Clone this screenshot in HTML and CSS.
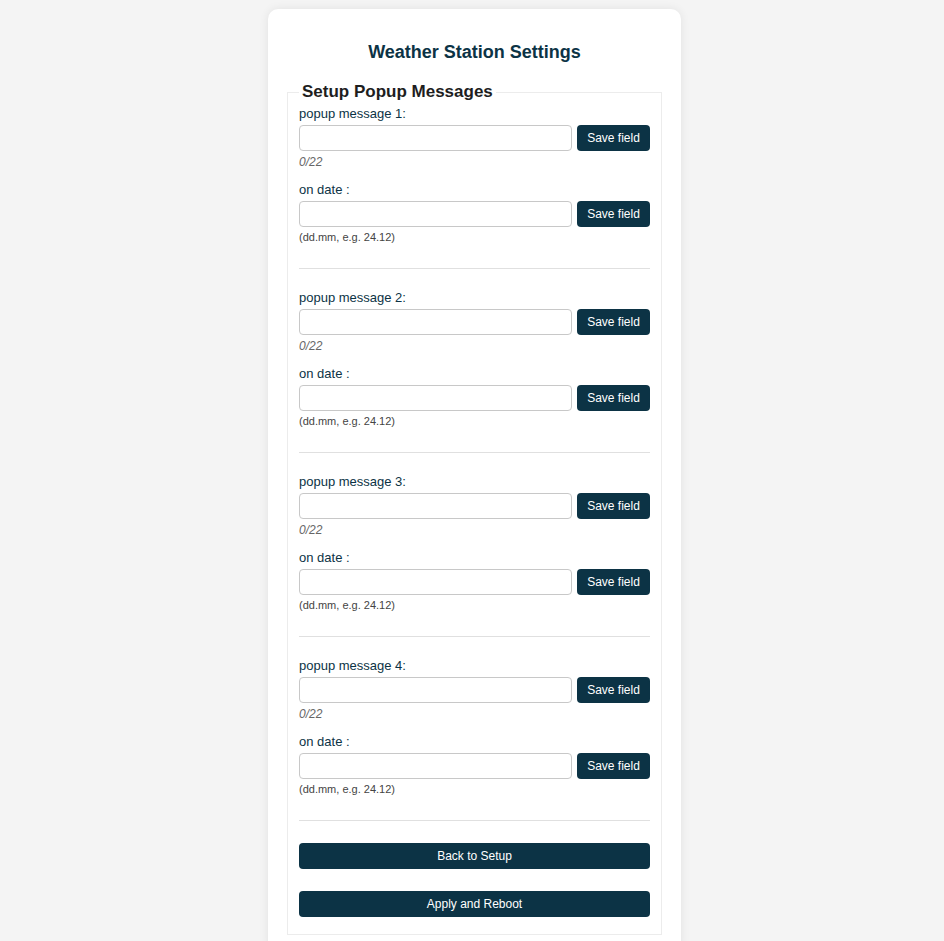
FILE: index.html
```html
<!DOCTYPE html>
<html>
<head>
<meta charset="utf-8">
<title>Weather Station Settings</title>
<link rel="stylesheet" href="styles.css">
</head>
<body>
<div class="card">
  <h1 class="title">Weather Station Settings</h1>
  <form>
    <fieldset class="box">
      <legend class="legend">Setup Popup Messages</legend>

      <div class="group">
        <label class="label">popup message 1:</label>
        <div class="row"><input class="input" type="text"><button type="button" class="btn">Save field</button></div>
        <div class="counter">0/22</div>
        <label class="label date-label">on date :</label>
        <div class="row"><input class="input" type="text"><button type="button" class="btn">Save field</button></div>
        <div class="hint">(dd.mm, e.g. 24.12)</div>
      </div>
      <hr class="sep">

      <div class="group">
        <label class="label">popup message 2:</label>
        <div class="row"><input class="input" type="text"><button type="button" class="btn">Save field</button></div>
        <div class="counter">0/22</div>
        <label class="label date-label">on date :</label>
        <div class="row"><input class="input" type="text"><button type="button" class="btn">Save field</button></div>
        <div class="hint">(dd.mm, e.g. 24.12)</div>
      </div>
      <hr class="sep">

      <div class="group">
        <label class="label">popup message 3:</label>
        <div class="row"><input class="input" type="text"><button type="button" class="btn">Save field</button></div>
        <div class="counter">0/22</div>
        <label class="label date-label">on date :</label>
        <div class="row"><input class="input" type="text"><button type="button" class="btn">Save field</button></div>
        <div class="hint">(dd.mm, e.g. 24.12)</div>
      </div>
      <hr class="sep">

      <div class="group">
        <label class="label">popup message 4:</label>
        <div class="row"><input class="input" type="text"><button type="button" class="btn">Save field</button></div>
        <div class="counter">0/22</div>
        <label class="label date-label">on date :</label>
        <div class="row"><input class="input" type="text"><button type="button" class="btn">Save field</button></div>
        <div class="hint">(dd.mm, e.g. 24.12)</div>
      </div>
      <hr class="sep">

      <div class="actions">
        <button type="button" class="btn wide">Back to Setup</button>
        <button type="button" class="btn wide">Apply and Reboot</button>
      </div>
    </fieldset>
  </form>
</div>
</body>
</html>
```
FILE: styles.css
```css
html, body {
  margin: 0;
  padding: 0;
}
body {
  background: #f4f4f4;
  font-family: "Liberation Sans", Arial, sans-serif;
  color: #0c3345;
  padding: 9px 0 40px 5px;
}
.card {
  width: 413px;
  box-sizing: border-box;
  margin: 0 auto;
  background: #fff;
  border-radius: 10px;
  box-shadow: 0 0 10px rgba(0, 0, 0, 0.08);
  padding: 33px 19px 20px;
}
.title {
  margin: 0 0 19px;
  font-size: 18px;
  line-height: 21px;
  font-weight: bold;
  text-align: center;
  color: #0c3345;
}
form { margin: 0; }
.box {
  margin: 0;
  border: 1px solid #ececec;
  padding: 0 11px 17px;
  min-width: 0;
}
.legend {
  padding: 0 3px;
  font-size: 17px;
  line-height: 20px;
  font-weight: bold;
  color: #1e1e1e;
}
.group {
  display: flex;
  flex-direction: column;
  padding-top: 4px;
}
.label {
  display: block;
  font-size: 13px;
  line-height: 15px;
  margin-bottom: 4px;
  color: #0c3345;
}
.date-label {
  margin-top: 13px;
}
.row {
  display: flex;
  gap: 5px;
  align-items: stretch;
}
.input {
  flex: 1;
  min-width: 0;
  height: 26px;
  box-sizing: border-box;
  border: 1px solid #c8c8c8;
  border-radius: 4px;
  padding: 0 6px;
  font-family: inherit;
  font-size: 13px;
  margin: 0;
}
.btn {
  width: 73px;
  height: 26px;
  box-sizing: border-box;
  border: none;
  border-radius: 4px;
  background: #0c3345;
  color: #fff;
  font-family: "Liberation Sans", Arial, sans-serif;
  font-size: 12px;
  padding: 0;
  margin: 0;
  cursor: pointer;
}
.counter {
  margin-top: 4px;
  font-size: 12px;
  line-height: 14px;
  font-style: italic;
  color: #666;
}
.hint {
  margin-top: 4px;
  font-size: 11px;
  line-height: 13px;
  color: #444;
}
.sep {
  border: none;
  border-top: 1px solid #e0e0e0;
  margin: 24px 0 17px;
  height: 0;
}
.actions {
  display: flex;
  flex-direction: column;
  gap: 22px;
  padding-top: 5px;
}
.btn.wide {
  width: 100%;
}
```
